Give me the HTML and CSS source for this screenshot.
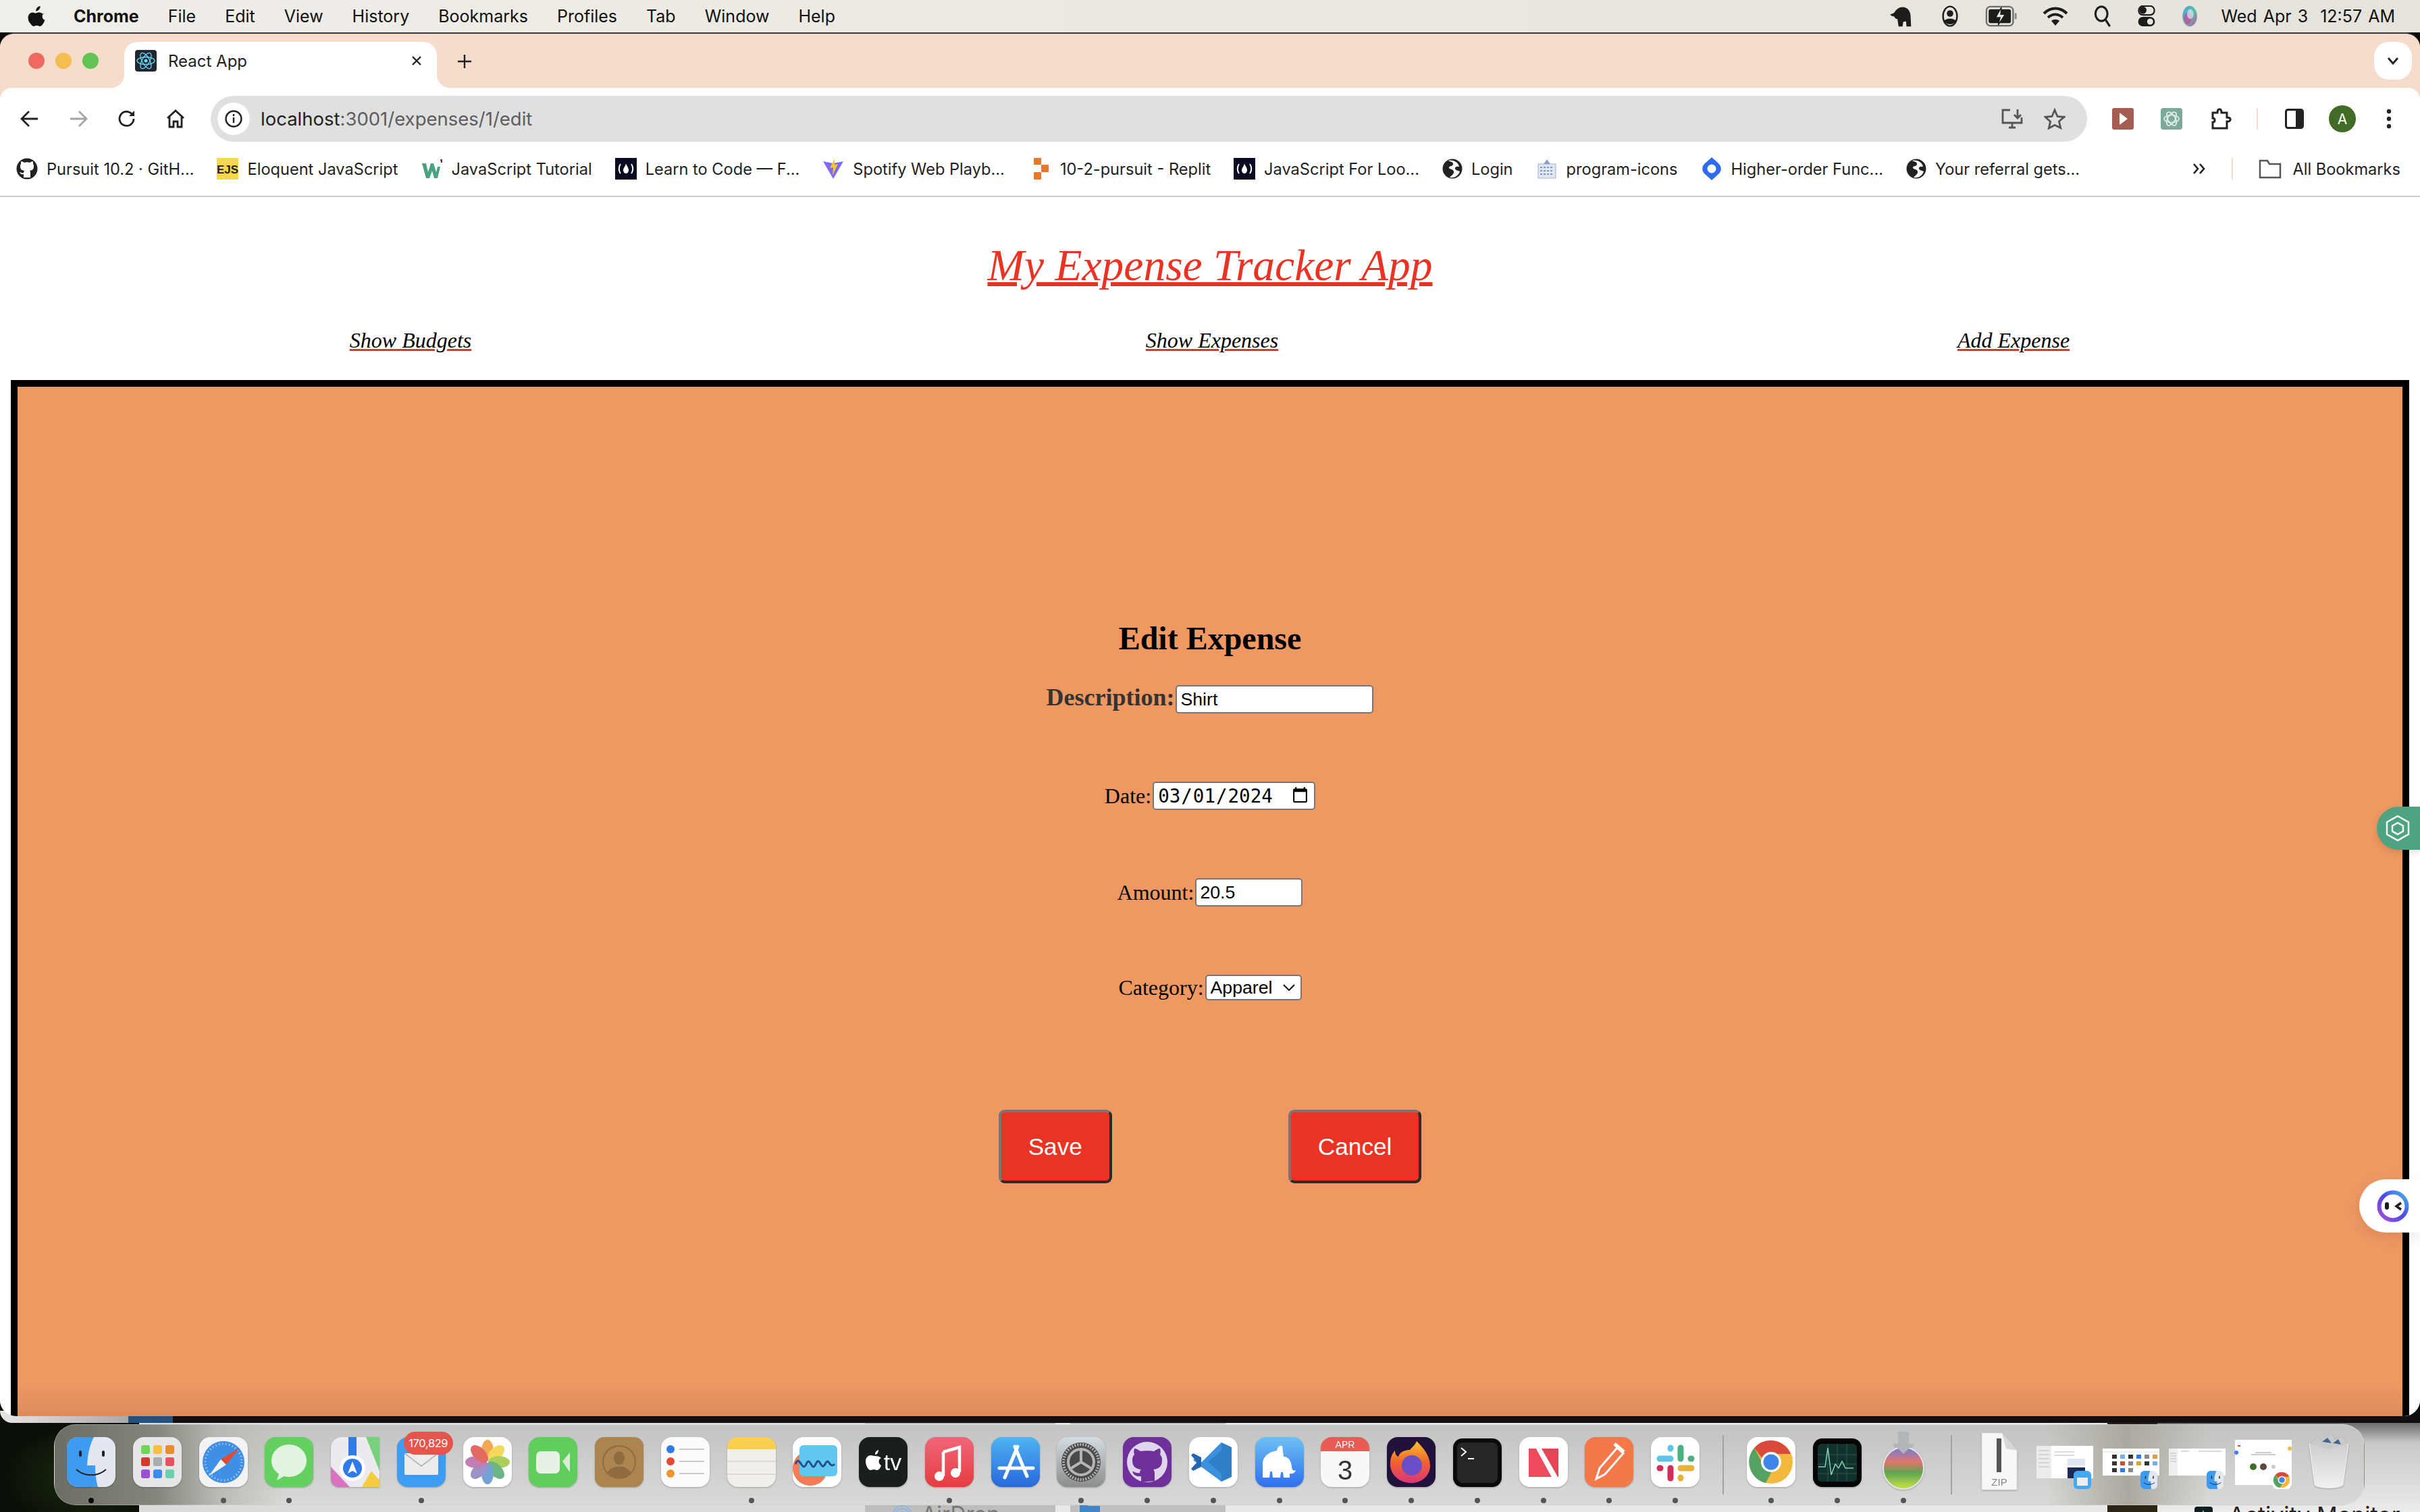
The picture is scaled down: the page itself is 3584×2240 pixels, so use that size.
FILE: index.html
```html
<!DOCTYPE html>
<html lang="en">
<head>
    <meta charset="UTF-8">
    <title>React App</title>
    <link rel="stylesheet" href="styles.css">
</head>
<body>
<svg class="symbols" width="0" height="0">
    <symbol id="mini-finder" viewBox="0 0 26 28"><rect width="26" height="28" rx="6" fill="#e3e7ef"/><path d="M6 0h9c-2 5-3 9-3 16h4c0 4 0 8 1 12H6a6 6 0 0 1-6-6V6a6 6 0 0 1 6-6z" fill="#3f9bf2"/><rect x="7" y="8" width="1.500" height="4" fill="#222"/><rect x="19" y="8" width="1.500" height="4" fill="#222"/><path d="M5 18c5 4 12 4 17 0" fill="none" stroke="#222"/></symbol>
    <symbol id="mini-chrome" viewBox="0 0 28 28"><rect width="28" height="28" rx="6" fill="#fff"/><circle cx="14" cy="14" r="12" fill="#f3b93f"/><path d="M14 2a12 12 0 0 1 11 7H14a5 5 0 0 0-5 3L4 6a12 12 0 0 1 10-4z" fill="#d94a3a"/><path d="M4 6l5 9a5 5 0 0 0 6 4l-4 7A12 12 0 0 1 4 6z" fill="#55a363"/><circle cx="14" cy="14" r="6" fill="#fff"/><circle cx="14" cy="14" r="4.500" fill="#4285e8"/></symbol>
    <symbol id="globe" viewBox="0 0 30 30"><circle cx="15" cy="15" r="14.500" fill="#222"/><path d="M9 3c3 2 7 1 7 5s-5 2-6 5 6 2 7 6-4 6-6 9c8 1 13-3 15-9-3-2-6-1-7-4s3-4 6-3c-1-6-8-11-16-9z" fill="#fff"/></symbol>
    <symbol id="fcc" viewBox="0 0 32 32"><rect width="32" height="32" fill="#0a0a23"/><path d="M8 9c-3 4-3 10 0 14M24 9c3 4 3 10 0 14" fill="none" stroke="#fff" stroke-width="2"/><path d="M16 8c1 4 4 6 4 10 0 3-2 5-4 5s-4-2-4-5c0-3 3-5 4-10z" fill="#fff"/></symbol>
</svg>
<div class="screen">

    <!-- what shows behind the browser window -->
    <div class="under-edge">
        <span class="edge-grey"></span><span class="edge-blue"></span><span class="edge-black"></span>
    </div>
    <div class="under-windows">
        <span class="uw-wall"></span>
        <span class="uw-side"></span>
        <span class="uw-airdrop"><svg width="30" height="30" viewBox="0 0 30 30" fill="none" stroke="#8fb4e6" stroke-width="2"><circle cx="15" cy="15" r="5"/><circle cx="15" cy="15" r="10"/><circle cx="15" cy="15" r="14"/></svg>AirDrop</span>
        <span class="uw-gap"></span>
        <span class="uw-folder"><svg width="30" height="24" viewBox="0 0 30 24"><path d="M0 0h10l3 3h17v21H0z" fill="#3f86c9"/></svg></span>
        <span class="uw-white"></span>
        <span class="uw-wall2"></span>
        <span class="uw-activity"><svg width="27" height="30" viewBox="0 0 27 30"><rect width="27" height="30" rx="4" fill="#10201e"/><path d="M2 16h8l3-10 3 16 3-6h6" fill="none" stroke="#6fb7a5" stroke-width="1.500"/></svg>Activity Monitor</span>
    </div>

    <header class="menubar">
        <div class="menu-left">
            <svg class="apple" width="26" height="32" viewBox="0 0 26 32"><path d="M18.600 1c.2 2-.6 3.800-1.700 5.100-1.200 1.400-2.900 2.400-4.700 2.300-.2-1.900.7-3.800 1.700-5C15 2 16.900 1.100 18.600 1zM24.800 11.200c-2.100 1.300-3.200 3-3.200 5.200 0 2.500 1.400 4.300 3.900 5.300-.7 2.100-1.600 4-2.900 5.800-1.300 1.800-2.500 3.400-4.400 3.400-1.900 0-2.500-1.100-4.700-1.100-2.200 0-2.900 1.100-4.700 1.100-1.900 0-3.200-1.700-4.500-3.600C2 25.100.6 21.700.6 18.400c0-5.200 3.400-8 6.700-8 1.800 0 3.300 1.200 4.500 1.200 1.100 0 2.800-1.300 4.900-1.300 2.200 0 3.900 1 5.300 2.200z" fill="#111"/></svg>
            <b class="menu-app">Chrome</b>
            <span>File</span><span>Edit</span><span>View</span><span>History</span><span>Bookmarks</span><span>Profiles</span><span>Tab</span><span>Window</span><span>Help</span>
        </div>
        <div class="menu-right">
            <svg width="42" height="38" viewBox="0 0 42 38"><path d="M1 16c3-1 5-1 8-4 3-5 8-9 14-9 8 0 13 6 14 14l1 20h-8l-1-9-5 1-1 8h-7l-2-13c-3 0-5-2-6-5-2 1-5-1-7-3z" fill="#1c1c1c"/></svg>
            <svg width="30" height="40" viewBox="0 0 30 40" fill="none"><ellipse cx="15" cy="20" rx="13" ry="18" stroke="#1c1c1c" stroke-width="3"/><circle cx="15" cy="15" r="6" fill="#1c1c1c"/><path d="M4 29c4-6 18-6 22 0-4 8-18 8-22 0z" fill="#1c1c1c"/></svg>
            <svg width="50" height="34" viewBox="0 0 50 34"><rect x="1.500" y="2" width="42" height="30" rx="6" fill="none" stroke="#6d6d6a" stroke-width="2.500"/><rect x="5" y="6" width="35" height="22" rx="3" fill="#1c1c1c"/><rect x="46" y="12" width="3" height="10" rx="1.500" fill="#888"/><path d="M25 3l-9 16h7l-3 12 11-17h-7z" fill="#e8e5de" stroke="#1c1c1c" stroke-width="1.500"/></svg>
            <svg width="38" height="30" viewBox="0 0 38 30" fill="none" stroke="#1c1c1c" stroke-width="4"><path d="M2 11c10-10 24-10 34 0"/><path d="M8 17c7-6 15-6 22 0"/><path d="M19 29l-6-7c3-3 9-3 12 0z" fill="#1c1c1c" stroke="none"/></svg>
            <svg width="30" height="36" viewBox="0 0 30 36" fill="none" stroke="#1c1c1c" stroke-width="3.500"><ellipse cx="13" cy="14" rx="10" ry="12"/><path d="M20 24l7 11"/></svg>
            <svg width="28" height="36" viewBox="0 0 28 36"><rect x="1" y="1" width="26" height="15" rx="7" fill="none" stroke="#1c1c1c" stroke-width="2.500"/><circle cx="8" cy="8" r="6" fill="#1c1c1c"/><rect y="19" width="28" height="16" rx="8" fill="#1c1c1c"/><circle cx="20" cy="27" r="5" fill="#e8e5de"/></svg>
            <svg width="28" height="40" viewBox="0 0 28 40"><defs><linearGradient id="siri" x1="0" y1="0" x2="1" y2="1"><stop offset="0" stop-color="#4f9fe0"/><stop offset=".5" stop-color="#54c0a5"/><stop offset="1" stop-color="#c851a8"/></linearGradient></defs><ellipse cx="14" cy="20" rx="13.500" ry="19" fill="url(#siri)"/><ellipse cx="10" cy="24" rx="7" ry="11" fill="#c24f9c" opacity=".8"/><ellipse cx="15" cy="16" rx="6" ry="9" fill="#dceaf3" opacity=".7"/></svg>
            <span class="clock">Wed Apr 3&nbsp; 12:57 AM</span>
        </div>
    </header>

    <div class="window">
        <div class="tabstrip">
            <div class="lights"><i class="red"></i><i class="yellow"></i><i class="green"></i></div>
            <div class="tab">
                <svg width="32" height="32" viewBox="0 0 32 32" fill="none" stroke="#61dafb" stroke-width="1.300"><rect width="32" height="32" rx="4" fill="#23272f" stroke="none"/><ellipse cx="16" cy="16" rx="13" ry="5.500"/><ellipse cx="16" cy="16" rx="13" ry="5.500" transform="rotate(60 16 16)"/><ellipse cx="16" cy="16" rx="13" ry="5.500" transform="rotate(120 16 16)"/><circle cx="16" cy="16" r="2.500" fill="#61dafb" stroke="none"/></svg>
                <span class="tab-title">React App</span>
                <svg class="tab-close" width="16" height="16" viewBox="0 0 16 16" stroke="#222" stroke-width="2.400"><path d="M2 2l12 12M14 2L2 14"/></svg>
            </div>
            <svg class="tab-new" width="22" height="22" viewBox="0 0 22 22" stroke="#222" stroke-width="2.400"><path d="M11 1v20M1 11h20"/></svg>
            <div class="tab-list"><svg width="18" height="12" viewBox="0 0 18 12" fill="none" stroke="#222" stroke-width="2.800"><path d="M2 2l7 8 7-8"/></svg></div>
        </div>

        <div class="toolbar">
            <div class="nav-buttons">
                <svg width="28" height="26" viewBox="0 0 28 26" fill="none" stroke="#222" stroke-width="2.800"><path d="M26 13H3M13 2L2 13l11 11"/></svg>
                <svg width="28" height="26" viewBox="0 0 28 26" fill="none" stroke="#a4a4a4" stroke-width="2.800"><path d="M2 13h23M15 2l11 11-11 11"/></svg>
                <svg width="28" height="28" viewBox="0 0 28 28" fill="none" stroke="#222" stroke-width="2.800"><path d="M24 14a10.500 10.500 0 1 1-3-7.500L24 9"/><path d="M25 2v8h-8" fill="#222" stroke="none"/></svg>
                <svg width="28" height="28" viewBox="0 0 28 28" fill="none" stroke="#222" stroke-width="2.800"><path d="M2 13L14 2l12 11M5 11v15h6v-8h6v8h6V11"/></svg>
            </div>
            <div class="omnibox">
                <span class="site-info"><svg width="28" height="28" viewBox="0 0 28 28" fill="none" stroke="#222" stroke-width="2.400"><circle cx="14" cy="14" r="11.500"/><path d="M14 12v8M14 7v3"/></svg></span>
                <span class="url"><span class="url-host">localhost</span>:3001/expenses/1/edit</span>
                <svg class="omni-icon" width="34" height="30" viewBox="0 0 34 30" fill="none" stroke="#555" stroke-width="2.800"><path d="M14 2H3v19h28v-8M12 28h10M17 21v7M25 1v13M20 9l5 5 5-5"/></svg>
                <svg class="omni-icon" width="32" height="32" viewBox="0 0 32 32" fill="none" stroke="#555" stroke-width="2.800"><path d="M16 3l4 9.500 10 .8-7.600 6.500 2.300 9.700L16 25.300 7.300 30l2.300-9.700L2 13.300l10-.8z"/></svg>
            </div>
            <div class="extensions">
                <svg width="32" height="32" viewBox="0 0 32 32"><rect width="32" height="32" rx="3" fill="#a55f50"/><path d="M11 7l12 9-12 9z" fill="#fff"/></svg>
                <svg width="32" height="32" viewBox="0 0 32 32" fill="none" stroke="#e3f0ec" stroke-width="1.600"><rect width="32" height="32" rx="4" fill="#7ba99a" stroke="none"/><ellipse cx="16" cy="16" rx="11" ry="5.500"/><ellipse cx="16" cy="16" rx="11" ry="5.500" transform="rotate(60 16 16)"/><ellipse cx="16" cy="16" rx="11" ry="5.500" transform="rotate(120 16 16)"/></svg>
                <svg width="34" height="34" viewBox="0 0 34 34" fill="none" stroke="#222" stroke-width="3"><path d="M5 8h7c0-7 6-7 6 0h8v7c7 0 7 6 0 6v10H5v-9c4 0 4-6 0-6z"/></svg>
                <span class="toolbar-sep"></span>
                <svg width="28" height="30" viewBox="0 0 28 30"><rect x="1.500" y="1.500" width="25" height="27" rx="3" fill="none" stroke="#222" stroke-width="3"/><rect x="16" y="2" width="10" height="26" fill="#222"/></svg>
                <span class="avatar">A</span>
                <svg class="kebab" width="8" height="30" viewBox="0 0 8 30" fill="#222"><circle cx="4" cy="4" r="3.200"/><circle cx="4" cy="15" r="3.200"/><circle cx="4" cy="26" r="3.200"/></svg>
            </div>
        </div>

        <div class="bookmarks">
            <div class="bm-list">
                <a class="bm"><svg width="32" height="32" viewBox="0 0 32 32"><circle cx="16" cy="16" r="15.500" fill="#222"/><path d="M11 29v-5c-4 1-5-1-6-3 2 0 3 2 6 1 0-2 1-2 1-3-5-1-6-3-6-7 0-2 1-3 1-4 0-2 0-3 1-3 1 0 3 1 4 2 2-1 6-1 8 0 1-1 3-2 4-2 1 0 1 1 1 3 0 1 1 2 1 4 0 4-1 6-6 7 1 1 1 2 1 4v6z" fill="#fff"/></svg>Pursuit 10.2 · GitH...</a>
                <a class="bm"><svg width="32" height="32" viewBox="0 0 32 32"><rect width="32" height="32" fill="#f7d84a"/><text x="16" y="23" font-family="Liberation Sans" font-size="17" font-weight="700" text-anchor="middle" fill="#222">EJS</text></svg>Eloquent JavaScript</a>
                <a class="bm"><svg width="32" height="32" viewBox="0 0 32 32"><path d="M1 8h6l3 13 4-13h4l4 13 2-8h4l-4 17h-5l-3-11-4 11H7z" fill="#4aa37f"/><path d="M28 2h3v5h-2z" fill="#444"/></svg>JavaScript Tutorial</a>
                <a class="bm"><svg width="32" height="32"><use href="#fcc"/></svg>Learn to Code — F...</a>
                <a class="bm"><svg width="32" height="32" viewBox="0 0 32 32"><path d="M1 5l15 3 15-3-15 26z" fill="#7d6cf5"/><path d="M18 1l-7 14 5-1-1 12 8-17-5 1z" fill="#fdc62c"/></svg>Spotify Web Playb...</a>
                <a class="bm bm-replit"><svg width="22" height="32" viewBox="0 0 22 32" fill="#e8762c"><rect width="11" height="10" rx="1"/><rect x="11" y="10" width="11" height="11" rx="1"/><rect y="21" width="11" height="11" rx="1"/></svg>10-2-pursuit - Replit</a>
                <a class="bm"><svg width="32" height="32"><use href="#fcc"/></svg>JavaScript For Loo...</a>
                <a class="bm"><svg width="30" height="30"><use href="#globe"/></svg>Login</a>
                <a class="bm"><svg width="32" height="32" viewBox="0 0 32 32"><rect x="3" y="9" width="26" height="21" fill="#dfe7f2" stroke="#9fb2cf"/><path d="M6 14h20M6 19h20M6 24h20" stroke="#7f97c0" stroke-dasharray="3 2" stroke-width="2"/><path d="M16 2l5 7H11z" fill="#8aa0c7"/></svg>program-icons</a>
                <a class="bm"><svg width="32" height="34" viewBox="0 0 32 34"><path d="M16 0l11 10a10 10 0 0 1 0 14L16 34 5 24a10 10 0 0 1 0-14z" fill="#2e6bf0"/><circle cx="16" cy="17" r="6.500" fill="#fff"/></svg>Higher-order Func...</a>
                <a class="bm"><svg width="30" height="30"><use href="#globe"/></svg>Your referral gets...</a>
            </div>
            <div class="bm-end">
                <svg width="20" height="18" viewBox="0 0 20 18" fill="none" stroke="#222" stroke-width="2.600"><path d="M2 2l6 7-6 7M11 2l6 7-6 7"/></svg>
                <span class="bm-sep"></span>
                <a class="bm"><svg width="34" height="30" viewBox="0 0 34 30" fill="none" stroke="#555" stroke-width="2.500"><path d="M2 28V3h11l3 5h16v20z"/></svg>All Bookmarks</a>
            </div>
        </div>

        <div class="page">
            <h1 class="app-title">My Expense Tracker App</h1>
            <nav class="app-nav">
                <a href="#">Show Budgets</a>
                <a href="#">Show Expenses</a>
                <a href="#">Add Expense</a>
            </nav>
            <main class="app-main">
                <h2 class="form-title">Edit Expense</h2>
                <form class="expense-form">
                    <div class="field">
                        <label class="label-strong" for="description">Description:</label>
                        <input class="input-text" type="text" id="description" value="Shirt">
                    </div>
                    <div class="field">
                        <label for="date">Date:</label>
                        <input class="input-date" type="date" id="date" value="2024-03-01">
                    </div>
                    <div class="field">
                        <label for="amount">Amount:</label>
                        <input class="input-amount" type="text" id="amount" value="20.5">
                    </div>
                    <div class="field">
                        <label for="category">Category:</label>
                        <select class="input-select" id="category"><option>Apparel</option></select>
                    </div>
                    <div class="form-buttons">
                        <button type="button" class="btn">Save</button>
                        <button type="button" class="btn">Cancel</button>
                    </div>
                </form>
            </main>
        </div>
    </div>

    <!-- extension widgets stuck to the right edge -->
    <div class="widget-green"><svg width="36" height="40" viewBox="0 0 36 40" fill="none" stroke="#fff" stroke-width="2.400"><path d="M18 2l16 9v18l-16 9-16-9V11z"/><path d="M18 12l8 4.500v8L18 29l-8-4.500v-8z"/></svg></div>
    <div class="widget-white"><svg width="48" height="48" viewBox="0 0 48 48" fill="none"><defs><linearGradient id="ring" x1="0" y1="1" x2="1" y2="0"><stop offset="0" stop-color="#b04fd0"/><stop offset=".5" stop-color="#4b47ee"/><stop offset="1" stop-color="#45b5e0"/></linearGradient></defs><circle cx="24" cy="24" r="20.500" stroke="url(#ring)" stroke-width="6"/><rect x="12" y="18" width="6" height="11" rx="3" fill="#1c1c1c"/><path d="M36 19l-7 5 7 5" stroke="#1c1c1c" stroke-width="3.400"/></svg></div>

    <div class="dock">
        <div class="dock-item on first"><svg width="72" height="74" viewBox="0 0 72 74"><rect width="72" height="74" rx="16" fill="#e3e7ef"/><path d="M16 0h24C34 12 31 24 30 42h12c0 12 1 22 4 32H16A16 16 0 0 1 0 58V16A16 16 0 0 1 16 0z" fill="#3f9bf2"/><rect x="18" y="20" width="4" height="9" rx="2" fill="#222"/><rect x="52" y="20" width="4" height="9" rx="2" fill="#222"/><path d="M14 48c12 11 32 11 44 0" fill="none" stroke="#222" stroke-width="2"/></svg></div>
        <div class="dock-item"><svg width="72" height="74" viewBox="0 0 72 74"><rect width="72" height="74" rx="16" fill="#e6e6e6"/><rect x="12" y="12" width="13" height="13" rx="3" fill="#6fd658"/><rect x="30" y="12" width="13" height="13" rx="3" fill="#f6bf3c"/><rect x="48" y="12" width="13" height="13" rx="3" fill="#ea8c2e"/><rect x="12" y="30" width="13" height="13" rx="3" fill="#d13a2c"/><rect x="30" y="30" width="13" height="13" rx="3" fill="#a7adb1"/><rect x="48" y="30" width="13" height="13" rx="3" fill="#ec5065"/><rect x="12" y="48" width="13" height="13" rx="3" fill="#9b4fd6"/><rect x="30" y="48" width="13" height="13" rx="3" fill="#3a8af0"/><rect x="48" y="48" width="13" height="13" rx="3" fill="#6bd0ae"/></svg></div>
        <div class="dock-item on"><svg width="72" height="74" viewBox="0 0 72 74"><rect width="72" height="74" rx="16" fill="#f3f3f5"/><circle cx="36" cy="37" r="31" fill="#3f8fe6"/><circle cx="36" cy="37" r="27" fill="none" stroke="#cfe3f8" stroke-width="3" stroke-dasharray="1 4"/><path d="M60 16L32 33l8 8z" fill="#e5492f"/><path d="M14 58l18-25 8 8z" fill="#f1f1f1"/></svg></div>
        <div class="dock-item on"><svg width="72" height="74" viewBox="0 0 72 74"><rect width="72" height="74" rx="16" fill="#63d05f"/><ellipse cx="36" cy="35" rx="26" ry="24" fill="#e5f3e3"/><path d="M22 52l-4 12 14-8z" fill="#e5f3e3"/></svg></div>
        <div class="dock-item"><svg width="72" height="74" viewBox="0 0 72 74"><rect width="72" height="74" rx="16" fill="#eceaf0"/><path d="M52 0h20v50z" fill="#75d17a"/><path d="M0 44l28 30H12A12 12 0 0 1 0 62z" fill="#d874bf"/><path d="M46 74l14-24 12 14v10z" fill="#f5cc3e"/><rect x="26" y="0" width="12" height="34" fill="#2f7ce8"/><circle cx="32" cy="46" r="19" fill="#fff"/><circle cx="32" cy="46" r="14" fill="#2f7ce8"/><path d="M32 36l7 18-7-4-7 4z" fill="#fff"/></svg></div>
        <div class="dock-item on"><svg width="72" height="74" viewBox="0 0 72 74"><rect width="72" height="74" rx="16" fill="#3f9cf3"/><rect x="11" y="24" width="50" height="32" rx="2" fill="#ececec"/><path d="M11 24l25 19 25-19" fill="none" stroke="#aaa" stroke-width="1.500"/></svg><span class="dock-badge">170,829</span></div>
        <div class="dock-item"><svg width="72" height="74" viewBox="0 0 72 74"><rect width="72" height="74" rx="16" fill="#fff"/><g opacity=".85"><ellipse cx="36" cy="20" rx="9" ry="16" fill="#f09a35"/><ellipse cx="36" cy="20" rx="9" ry="16" fill="#f4d13d" transform="rotate(45 36 37)"/><ellipse cx="36" cy="20" rx="9" ry="16" fill="#9cc83f" transform="rotate(90 36 37)"/><ellipse cx="36" cy="20" rx="9" ry="16" fill="#53a86f" transform="rotate(135 36 37)"/><ellipse cx="36" cy="20" rx="9" ry="16" fill="#5b93cf" transform="rotate(180 36 37)"/><ellipse cx="36" cy="20" rx="9" ry="16" fill="#8b7fbe" transform="rotate(225 36 37)"/><ellipse cx="36" cy="20" rx="9" ry="16" fill="#b668a5" transform="rotate(270 36 37)"/><ellipse cx="36" cy="20" rx="9" ry="16" fill="#dc5148" transform="rotate(315 36 37)"/></g></svg></div>
        <div class="dock-item"><svg width="72" height="74" viewBox="0 0 72 74"><rect width="72" height="74" rx="16" fill="#5fce5c"/><rect x="11" y="21" width="35" height="33" rx="7" fill="#e7f2e5"/><path d="M50 36l11-13v29z" fill="#dcecd9"/></svg></div>
        <div class="dock-item"><svg width="72" height="74" viewBox="0 0 72 74"><rect width="72" height="74" rx="14" fill="#ab8450"/><circle cx="36" cy="37" r="24" fill="none" stroke="#8f6c40" stroke-width="2"/><ellipse cx="36" cy="31" rx="8" ry="10" fill="#8f6c40"/><path d="M18 54c6-14 30-14 36 0-10 9-26 9-36 0z" fill="#8f6c40"/></svg></div>
        <div class="dock-item"><svg width="72" height="74" viewBox="0 0 72 74"><rect width="72" height="74" rx="16" fill="#fbfbfb"/><circle cx="14" cy="18" r="6" fill="#2f7ce8"/><circle cx="14" cy="36" r="6" fill="#e5483b"/><circle cx="14" cy="54" r="6" fill="#ee952c"/><path d="M27 18h37M27 36h37M27 54h37" stroke="#c9c9c9" stroke-width="2"/></svg></div>
        <div class="dock-item on"><svg width="72" height="74" viewBox="0 0 72 74"><rect width="72" height="74" rx="16" fill="#f1efe9"/><path d="M0 18A16 16 0 0 1 16 0h40a16 16 0 0 1 16 18z" fill="#f8d04d"/><path d="M0 36h72M0 55h72" stroke="#dcdad3" stroke-width="2"/></svg></div>
        <div class="dock-item"><svg width="72" height="74" viewBox="0 0 72 74"><rect width="72" height="74" rx="16" fill="#fff"/><circle cx="26" cy="46" r="26" fill="#f57b55"/><rect x="10" y="12" width="56" height="46" rx="6" fill="#60c8f0"/><path d="M4 40c6-16 10 14 16 0s8 14 14 0 8 12 14 0 6 8 14 0" fill="none" stroke="#234f8f" stroke-width="3"/></svg></div>
        <div class="dock-item"><svg width="72" height="74" viewBox="0 0 72 74"><rect width="72" height="74" rx="16" fill="#1a1f1d"/><path d="M24 28c-3 0-4-1-6-1-4 0-8 3-8 9 0 6 4 13 7 13 2 0 3-1 5-1s3 1 5 1c3 0 5-4 6-7-4-2-5-9 0-11-2-2-5-3-9-3zM24 26c0-4 2-6 5-7 0 4-2 7-5 7z" fill="#fff"/><text x="50" y="49" font-family="Liberation Sans" font-size="34" text-anchor="middle" fill="#fff">tv</text></svg></div>
        <div class="dock-item on"><svg width="72" height="74" viewBox="0 0 72 74"><defs><linearGradient id="music" x1="0" y1="0" x2="0" y2="1"><stop offset="0" stop-color="#f0667a"/><stop offset="1" stop-color="#e73b40"/></linearGradient></defs><rect width="72" height="74" rx="16" fill="url(#music)"/><path d="M27 22l24-7v37" fill="none" stroke="#fff" stroke-width="4.500"/><path d="M27 22v36" stroke="#fff" stroke-width="4.500"/><circle cx="21" cy="58" r="7" fill="#fff"/><circle cx="45" cy="53" r="7" fill="#fff"/></svg></div>
        <div class="dock-item"><svg width="72" height="74" viewBox="0 0 72 74"><defs><linearGradient id="store" x1="0" y1="0" x2="0" y2="1"><stop offset="0" stop-color="#4fb4f0"/><stop offset="1" stop-color="#2868dc"/></linearGradient></defs><rect width="72" height="74" rx="16" fill="url(#store)"/><path d="M39 14L20 60M35 14l18 44M12 46h50" stroke="#fff" stroke-width="5" fill="none" stroke-linecap="round"/></svg></div>
        <div class="dock-item on"><svg width="72" height="74" viewBox="0 0 72 74"><defs><linearGradient id="gear" x1="0" y1="0" x2="0" y2="1"><stop offset="0" stop-color="#d3dde2"/><stop offset="1" stop-color="#8c8c8c"/></linearGradient></defs><rect width="72" height="74" rx="16" fill="url(#gear)"/><circle cx="36" cy="37" r="29" fill="#4a4a4a"/><circle cx="36" cy="37" r="26" fill="none" stroke="#b5b5b5" stroke-width="4" stroke-dasharray="2 2"/><circle cx="36" cy="37" r="19" fill="none" stroke="#b5b5b5" stroke-width="4"/><path d="M36 37V19M36 37l16 10M36 37L20 47" stroke="#b5b5b5" stroke-width="4"/></svg></div>
        <div class="dock-item on"><svg width="72" height="74" viewBox="0 0 72 74"><rect width="72" height="74" rx="16" fill="#6e3199"/><circle cx="36" cy="37" r="30" fill="#dfd5ec"/><path d="M27 67V58c-8 1-11-2-13-7 3 0 5 3 11 2 0-3 1-4 2-5-10-1-13-6-13-14 0-4 1-6 3-8-1-3-1-6 0-9 3 0 6 2 9 4 5-1 15-1 20 0 3-2 6-4 9-4 1 3 1 6 0 9 2 2 3 4 3 8 0 8-3 13-13 14 1 1 2 3 2 6v11z" fill="#6e3199"/></svg></div>
        <div class="dock-item on"><svg width="72" height="74" viewBox="0 0 72 74"><rect width="72" height="74" rx="16" fill="#fff"/><path d="M48 8l15 7v44l-15 7-30-28z" fill="#2f80c9"/><path d="M48 8L18 38 9 31l-3 3 12 10 30 22V54L28 37 48 20z" fill="#3c91dd"/><path d="M18 30L6 24l-3 3 9 10-9 10 3 3 12-6z" fill="#2565ad"/></svg></div>
        <div class="dock-item on"><svg width="72" height="74" viewBox="0 0 72 74"><defs><linearGradient id="tp" x1="0" y1="0" x2="0" y2="1"><stop offset="0" stop-color="#6cc1f4"/><stop offset="1" stop-color="#2f6ff0"/></linearGradient></defs><rect width="72" height="74" rx="16" fill="url(#tp)"/><path d="M11 60V40c0-12 10-18 21-20 1-5 3-8 8-7l2 16c8 0 11 7 12 14 0 5 2 8 6 6-1 4-5 6-9 5v6h-9l-1-8h-3l-1 8H26l-1-9h-3l-1 9z" fill="#fff"/></svg></div>
        <div class="dock-item on"><svg width="72" height="74" viewBox="0 0 72 74"><rect width="72" height="74" rx="16" fill="#f8f8f6"/><path d="M0 21V16A16 16 0 0 1 16 0h40a16 16 0 0 1 16 16v5z" fill="#e55d54"/><text x="36" y="16" font-family="Liberation Sans" font-size="14" text-anchor="middle" fill="#fff">APR</text><text x="36" y="63" font-family="Liberation Sans" font-size="40" text-anchor="middle" fill="#333">3</text></svg></div>
        <div class="dock-item on"><svg width="72" height="74" viewBox="0 0 72 74"><defs><linearGradient id="fox" x1="0" y1="0" x2="0" y2="1"><stop offset="0" stop-color="#f8c531"/><stop offset=".5" stop-color="#f0622e"/><stop offset="1" stop-color="#d9357a"/></linearGradient></defs><rect width="72" height="74" rx="16" fill="#20123a"/><path d="M44 6c10 10 20 22 20 36 0 16-13 26-28 26S5 58 5 40c0-10 3-16 7-20 0 5 2 8 5 9 2-8 12-10 17-10 3-4 8-7 10-13z" fill="url(#fox)"/><circle cx="37" cy="42" r="15" fill="#6a4fc9"/></svg></div>
        <div class="dock-item on"><svg width="72" height="74" viewBox="0 0 72 74"><rect x="0" y="2" width="72" height="72" rx="14" fill="#0a0a0a"/><rect x="6" y="8" width="60" height="60" rx="8" fill="#262626"/><path d="M12 16l7 6-7 6M22 32h9" fill="none" stroke="#fff" stroke-width="2"/></svg></div>
        <div class="dock-item on"><svg width="72" height="74" viewBox="0 0 72 74"><rect width="72" height="74" rx="16" fill="#fff"/><path d="M14 17h11l23 42H14z" fill="#ee4c5e"/><path d="M30 17h28v42H52z" fill="#e64558"/><path d="M25 17h8l24 42h-9z" fill="#fff"/></svg></div>
        <div class="dock-item on"><svg width="72" height="74" viewBox="0 0 72 74"><rect width="72" height="74" rx="16" fill="#f4784a"/><path d="M17 62l5-16 26-30 9 8-27 31z" fill="none" stroke="#fff" stroke-width="3"/><path d="M44 10l14 12" stroke="#fff" stroke-width="5"/></svg></div>
        <div class="dock-item on"><svg width="72" height="74" viewBox="0 0 72 74"><rect width="72" height="74" rx="16" fill="#fff"/><g fill="none" stroke-width="9" stroke-linecap="round"><path d="M29 16v1" stroke="#5fc3ea"/><path d="M13 32h16" stroke="#5fc3ea"/><path d="M44 16v16" stroke="#4bb07f"/><path d="M59 32h1" stroke="#4bb07f"/><path d="M44 46h16" stroke="#e6b23c"/><path d="M44 60v1" stroke="#e6b23c"/><path d="M29 46v15" stroke="#d22c5a"/><path d="M13 46h1" stroke="#d22c5a"/></g></svg></div>
        <span class="dock-sep"></span>
        <div class="dock-item on"><svg width="72" height="74" viewBox="0 0 72 74"><rect width="72" height="74" rx="16" fill="#fff"/><circle cx="36" cy="37" r="32" fill="#f3b93f"/><path d="M36 5a32 32 0 0 1 29 20H36a13 13 0 0 0-12 8L11 16A32 32 0 0 1 36 5z" fill="#d94a3a"/><path d="M11 16l13 24a13 13 0 0 0 14 9L28 68A32 32 0 0 1 11 16z" fill="#55a363"/><circle cx="36" cy="37" r="15" fill="#fff"/><circle cx="36" cy="37" r="11.500" fill="#4285e8"/></svg></div>
        <div class="dock-item on"><svg width="72" height="74" viewBox="0 0 72 74"><rect y="2" width="72" height="72" rx="14" fill="#060606"/><rect x="7" y="10" width="58" height="56" rx="6" fill="#12302c"/><path d="M7 26h58M7 40h58M7 54h58M22 10v56M36 10v56M50 10v56" stroke="#2d5650" stroke-width="1"/><path d="M8 44h10l4-28 5 40 6-16 5 6 5-10 5 10h12" fill="none" stroke="#7dd4bb" stroke-width="1.500"/></svg></div>
        <div class="dock-item on"><svg width="72" height="74" viewBox="0 0 72 74"><defs><linearGradient id="sonoma" x1="0" y1="0" x2="0" y2="1"><stop offset="0" stop-color="#6a7fd8"/><stop offset=".35" stop-color="#e4746c"/><stop offset=".6" stop-color="#5fa350"/><stop offset="1" stop-color="#c8e34a"/></linearGradient></defs><ellipse cx="36" cy="46" rx="30" ry="31" fill="url(#sonoma)" stroke="#e6e6ea" stroke-width="2"/><path d="M29 -8h14v18h8L36 25 21 10h8z" fill="#b1b6b9"/></svg></div>
        <span class="dock-sep"></span>
        <div class="dock-item no-dot"><svg class="tall-icon" width="72" height="86" viewBox="0 0 72 86"><path d="M10 0h30l22 26v58H10z" fill="#f7f7f7" stroke="#ddd"/><path d="M40 0l22 26-16-3z" fill="#d7d7d7"/><rect x="32" y="8" width="7" height="50" fill="#555"/><text x="36" y="78" font-family="Liberation Sans" font-size="15" text-anchor="middle" fill="#888">ZIP</text></svg></div>
        <div class="dock-thumb"><svg width="84" height="80" viewBox="0 0 84 80"><rect y="13" width="84" height="48" fill="#fff"/><rect y="13" width="22" height="48" fill="#ececec"/><path d="M3 20h16M3 26h16M3 32h16M3 38h16M3 44h16M26 22h30M26 27h30" stroke="#bbb"/><rect x="46" y="45" width="26" height="16" fill="#1d2a55"/><rect x="46" y="32" width="26" height="10" fill="#dfe5ee"/><rect x="55" y="50" width="26" height="27" rx="6" fill="#45a8f2"/><rect x="60" y="60" width="16" height="12" fill="#eee"/></svg></div>
        <div class="dock-thumb"><svg width="84" height="80" viewBox="0 0 84 80"><rect y="17" width="84" height="40" fill="#fff"/><path d="M0 22h84" stroke="#ddd"/><g fill="#333"><rect x="14" y="26" width="7" height="6"/><rect x="26" y="26" width="7" height="6" fill="#6fb0e6"/><rect x="38" y="26" width="7" height="6"/><rect x="50" y="26" width="7" height="6" fill="#2f7ce8"/><rect x="62" y="26" width="7" height="6" fill="#888"/><rect x="74" y="26" width="7" height="6" fill="#d6a23c"/><rect x="14" y="36" width="7" height="6"/><rect x="26" y="36" width="7" height="6" fill="#c9502f"/><rect x="38" y="36" width="7" height="6" fill="#888"/><rect x="50" y="36" width="7" height="6" fill="#d6a23c"/><rect x="62" y="36" width="7" height="6"/><rect x="74" y="36" width="7" height="6" fill="#6fb0e6"/><rect x="14" y="46" width="7" height="6"/><rect x="26" y="46" width="7" height="6" fill="#2f7ce8"/><rect x="38" y="46" width="7" height="6" fill="#888"/></g><use href="#mini-finder" x="55" y="50" width="27" height="27"/></svg></div>
        <div class="dock-thumb"><svg width="84" height="80" viewBox="0 0 84 80"><rect y="17" width="84" height="40" fill="#fff"/><rect y="17" width="13" height="40" fill="#eee"/><path d="M2 24h9M2 28h9M2 32h9M2 36h9M18 21h12M44 21h34" stroke="#bbb"/><use href="#mini-finder" x="55" y="50" width="27" height="27"/></svg></div>
        <div class="dock-thumb"><svg width="84" height="80" viewBox="0 0 84 80"><rect y="4" width="84" height="67" fill="#fff"/><rect x="4" y="12" width="4" height="2" fill="#e5483b"/><circle cx="2" cy="23" r="3" fill="#3f7ce8"/><circle cx="81" cy="17" r="3" fill="#f3b93f"/><path d="M30 23h24M24 26h36" stroke="#999"/><circle cx="27" cy="44" r="5" fill="#3f6d28"/><circle cx="42" cy="44" r="5" fill="#5d4a3c"/><circle cx="57" cy="44" r="3" fill="#ccc"/><use href="#mini-chrome" x="56" y="50" width="27" height="27"/></svg></div>
        <div class="dock-item no-dot"><svg class="tall-icon" width="72" height="84" viewBox="0 0 72 84"><defs><linearGradient id="bin" x1="0" y1="0" x2="0" y2="1"><stop offset="0" stop-color="#cfcfcd"/><stop offset="1" stop-color="#f0f0ee"/></linearGradient></defs><path d="M7 16h58l-8 60c-1 7-41 7-42 0z" fill="url(#bin)" stroke="#f4f4f3"/><path d="M8 16l12-10 8 6 10-12 8 10 8-6 10 12-28 8z" fill="#c9c9cb"/><path d="M26 13l8-6 6 8zM42 15l8-6 4 8z" fill="#44648a"/></svg></div>
    </div>
</div>
</body>
</html>
```

FILE: styles.css
```css
* {
    box-sizing: border-box;
}

body {
    margin: 0;
    background-color: #0b0f08;
    font-family: Inter, "Liberation Sans", sans-serif;
}

.symbols {
    position: absolute;
}

.screen {
    position: relative;
    width: 3584px;
    height: 2240px;
    overflow: hidden;
    display: flex;
    flex-direction: column;
}

/* stuff below the browser window */
.under-edge {
    position: absolute;
    left: 0;
    right: 0;
    top: 2090px;
    height: 18px;
    display: flex;
}

.edge-grey {
    width: 190px;
    background: linear-gradient(90deg, #e6e6e6, #a9a9a9);
    border-radius: 0 0 0 24px;
}

.edge-blue {
    width: 66px;
    background-color: #1d5288;
}

.edge-black {
    flex: 1;
    background-color: #101010;
}

.under-windows {
    position: absolute;
    left: 0;
    right: 0;
    top: 2108px;
    height: 132px;
    display: flex;
    align-items: flex-end;
}

.under-windows > span {
    height: 100%;
    display: flex;
    align-items: flex-end;
    overflow: hidden;
}

.uw-wall {
    width: 206px;
    background: radial-gradient(ellipse at 60% 60%, #1a2a10, #0a0f07 70%);
}

.uw-side {
    width: 1075px;
    background-color: #dcdcdc;
}

.uw-airdrop {
    width: 282px;
    background-color: #bdbdbd;
    color: #777;
    font-size: 32px;
    line-height: 1;
    gap: 14px;
    padding-left: 40px;
    margin-bottom: -20px;
    height: calc(100% + 20px) !important;
}

.uw-gap {
    width: 22px;
    background-color: #e8e8e8;
}

.uw-folder {
    width: 230px;
    background-color: #c0c0c0;
    padding-left: 14px;
    margin-bottom: -12px;
    height: calc(100% + 12px) !important;
}

.uw-white {
    width: 1306px;
    background-color: #e8e8e8;
}

.uw-wall2 {
    width: 74px;
    background-color: #2b2415;
}

.uw-activity {
    flex: 1;
    background: linear-gradient(#6c6c6c, #c9c9c9 30px, #e0e0e0 100px, #f4f4f4);
    color: #222;
    font-size: 34px;
    line-height: 1;
    gap: 24px;
    padding-left: 55px;
    margin-bottom: -22px;
    height: calc(100% + 22px) !important;
}

.menubar {
    height: 48px;
    flex: none;
    display: flex;
    justify-content: space-between;
    align-items: center;
    padding: 0 37px 0 41px;
    background: linear-gradient(90deg, #f0eee8, #e6e3dc);
    color: #111;
    font-size: 25px;
}

.menu-left {
    display: flex;
    align-items: center;
    gap: 43px;
}

.apple {
    margin-right: -1px;
}

.menu-app {
    font-weight: 700;
}

.menu-right {
    display: flex;
    align-items: center;
    gap: 36px;
}

.menu-right svg {
    height: 32px;
}

.clock {
    margin-left: -4px;
    word-spacing: 2px;
}

.window {
    position: relative;
    height: 2050px;
    flex: none;
    display: flex;
    flex-direction: column;
    background-color: #f6dccb;
    border-top: 2px solid #3b3b3b;
    border-radius: 22px 22px 24px 24px;
    overflow: hidden;
    color: #1f1f1f;
}

.tabstrip {
    height: 80px;
    flex: none;
    display: flex;
    align-items: flex-end;
    background-color: #f6dccb;
    position: relative;
}

.lights {
    display: flex;
    gap: 16px;
    padding: 0 0 28px 42px;
    align-self: flex-end;
}

.lights i {
    display: block;
    width: 24px;
    height: 24px;
    border-radius: 50%;
}

.lights .red { background-color: #ee6a5f; }
.lights .yellow { background-color: #f5bd4f; }
.lights .green { background-color: #61c454; }

.tab {
    position: relative;
    width: 463px;
    height: 68px;
    margin-left: 38px;
    padding: 0 22px 12px 16px;
    display: flex;
    align-items: center;
    gap: 17px;
    background-color: #fff;
    border-radius: 20px 20px 0 0;
    font-size: 24px;
}

/* the small curves where the tab meets the toolbar */
.tab::before,
.tab::after {
    content: "";
    position: absolute;
    bottom: 0;
    width: 20px;
    height: 20px;
}

.tab::before {
    left: -20px;
    background: radial-gradient(circle at 0 0, transparent 20px, #fff 20.5px);
}

.tab::after {
    right: -20px;
    background: radial-gradient(circle at 100% 0, transparent 20px, #fff 20.5px);
}

.tab-title {
    flex: 1;
}

.tab-new {
    margin: 0 0 28px 30px;
}

.tab-list {
    margin: 0 12px 12px auto;
    width: 56px;
    height: 56px;
    background-color: #fff;
    border-radius: 22px;
    display: flex;
    align-items: center;
    justify-content: center;
}

.toolbar {
    height: 80px;
    flex: none;
    display: flex;
    padding-top: 12px;
    background-color: #fff;
    border-radius: 18px 18px 0 0;
}

.nav-buttons {
    width: 312px;
    height: 68px;
    padding: 0 0 0 30px;
    display: flex;
    align-items: center;
    gap: 44px;
}

.omnibox {
    width: 2779px;
    height: 68px;
    display: flex;
    align-items: center;
    background-color: #e0e0e0;
    border-radius: 34px;
    padding: 0 32px 0 10px;
    gap: 30px;
    color: #5d5d5d;
    font-size: 27.5px;
}

.site-info {
    width: 48px;
    height: 48px;
    border-radius: 50%;
    background-color: #fff;
    display: flex;
    align-items: center;
    justify-content: center;
    margin-right: -14px;
}

.url {
    flex: 1;
}

.url-host {
    color: #222;
}

.extensions {
    flex: 1;
    height: 68px;
    display: flex;
    align-items: center;
    gap: 40px;
    padding-left: 37px;
}

.toolbar-sep {
    width: 2px;
    height: 32px;
    background-color: #f6dccb;
    margin: 0 0 0 -4px;
}

.avatar {
    width: 40px;
    height: 40px;
    margin: 0 -1px 0 -3px;
    border-radius: 50%;
    background-color: #416b27;
    color: #fff;
    font-size: 21px;
    display: flex;
    align-items: center;
    justify-content: center;
}

.kebab {
    margin-left: 6px;
}

.bookmarks {
    height: 82px;
    flex: none;
    display: flex;
    justify-content: space-between;
    align-items: center;
    padding: 0 29px 0 24px;
    background-color: #fff;
    border-bottom: 2px solid #cfcfcf;
    font-size: 23.6px;
}

.bm-list {
    display: flex;
    align-items: center;
    gap: 34px;
}

.bm {
    display: flex;
    align-items: center;
    gap: 13px;
    white-space: nowrap;
}

.bm-replit {
    margin-left: 9px;
    gap: 17px;
}

.bm-end {
    display: flex;
    align-items: center;
    gap: 38px;
}

.bm-end .bm {
    gap: 16px;
}

.bm-sep {
    width: 2px;
    height: 32px;
    background-color: #f6dccb;
}

.page {
    flex: 1;
    min-height: 0;
    display: flex;
    flex-direction: column;
    background-color: #fff;
}

.app-title {
    margin: 0;
    padding-top: 61px;
    height: 148px;
    text-align: center;
    font-family: "Liberation Serif", serif;
    font-style: italic;
    font-weight: 400;
    font-size: 65.5px;
    line-height: 80px;
    color: #ea3323;
    text-decoration: underline;
    text-decoration-thickness: 6px;
    text-underline-offset: 3px;
}

.app-nav {
    height: 123px;
    display: grid;
    grid-template-columns: repeat(3, 1187px);
    justify-content: center;
    justify-items: center;
    align-items: center;
    padding: 6px 0 0 6px;
    font-family: "Liberation Serif", serif;
    font-style: italic;
    font-size: 32px;
}

.app-nav a {
    color: #000;
    text-decoration: underline;
    text-decoration-color: #ea3323;
    text-decoration-thickness: 3px;
    text-underline-offset: 2px;
}

.app-main {
    flex: 1;
    margin: 0 16px;
    padding-top: 345px;
    border: 10px solid #000;
    border-bottom: 0;
    background: linear-gradient(#f09862 calc(100% - 50px), #db8c5c);
    color: #000;
    font-family: "Liberation Serif", serif;
    font-size: 32px;
}

.form-title {
    margin: 0 0 41px;
    text-align: center;
    font-size: 48px;
    line-height: 56px;
}

.expense-form {
    display: flex;
    flex-direction: column;
    align-items: center;
    gap: 101px;
}

.field {
    display: flex;
    align-items: center;
    gap: 2px;
}

.label-strong {
    font-size: 36px;
    line-height: 34px;
    padding-bottom: 6px;
    font-weight: 700;
    color: #333;
}

.input-text,
.input-amount,
.input-date,
.input-select {
    height: 42px;
    margin: 0;
    padding: 0 5px;
    border: 2px solid #767676;
    border-radius: 5px;
    background-color: #fff;
    color: #000;
    font-family: "Liberation Sans", sans-serif;
    font-size: 26.67px;
}

.input-text {
    width: 293px;
}

.input-amount {
    width: 159px;
}

.input-date {
    width: 241px;
    font-family: "DejaVu Sans Mono", monospace;
    font-size: 27.5px;
}

.input-select {
    width: 143px;
    height: 38px;
    padding-left: 6px;
    appearance: none;
    background: #fff url("data:image/svg+xml,%3Csvg xmlns='http://www.w3.org/2000/svg' width='18' height='10' viewBox='0 0 18 10'%3E%3Cpath d='M1 1l8 8 8-8' fill='none' stroke='%23111' stroke-width='2'/%3E%3C/svg%3E") no-repeat right 8px center;
}

.form-buttons {
    display: flex;
    gap: 261px;
    margin-top: 61px;
}

.btn {
    padding: 30px 40px;
    border: 4px solid;
    border-color: #767676 #2b2b2b #2b2b2b #767676;
    border-radius: 9px;
    background-color: #ea3323;
    color: #fff;
    font-family: "Liberation Sans", sans-serif;
    font-size: 35.2px;
    line-height: 41px;
}

.widget-green {
    position: absolute;
    right: 0;
    top: 1195px;
    width: 64px;
    height: 64px;
    padding-left: 13px;
    display: flex;
    align-items: center;
    background-color: #4ea481;
    border-radius: 32px 0 0 32px;
    box-shadow: 0 4px 12px rgba(0, 0, 0, 0.12);
}

.widget-white {
    position: absolute;
    right: 0;
    top: 1747px;
    width: 90px;
    height: 79px;
    padding-left: 26px;
    display: flex;
    align-items: center;
    background-color: #fff;
    border-radius: 40px 0 0 40px;
    box-shadow: 0 6px 24px rgba(0, 0, 0, 0.1);
}

.dock {
    position: absolute;
    left: 80px;
    top: 2110px;
    width: 3422px;
    height: 120px;
    padding: 18px 0 0 18px;
    display: flex;
    gap: 25.75px;
    border: 1px solid rgba(255, 255, 255, 0.25);
    border-radius: 32px;
    background:
        linear-gradient(90deg, #6d6d63 0, #85857c 150px, #b9b9b4 240px, rgba(200, 200, 197, 0) 340px),
        linear-gradient(90deg, rgba(168, 166, 157, 0) 2950px, #aba99f 3070px, rgba(168, 166, 157, 0) 3190px),
        linear-gradient(#c3c3c1, #d9d9d7);
}

.dock-item {
    position: relative;
    width: 72px;
    display: flex;
    flex-direction: column;
    align-items: center;
    flex: none;
}

.dock-item svg {
    flex: none;
    overflow: visible;
    filter: drop-shadow(0 1px 1px rgba(0, 0, 0, 0.25));
}

.dock-item::after {
    content: "";
    width: 8px;
    height: 8px;
    margin-top: 16px;
    border-radius: 50%;
}

.dock-item.on::after {
    background-color: #555;
}

.dock-item.first::after {
    background-color: #000;
}

.dock-item.no-dot::after {
    display: none;
}

.dock-badge {
    position: absolute;
    left: 10px;
    top: -8px;
    width: 73px;
    height: 34px;
    border-radius: 17px;
    background-color: #e5554b;
    color: #fff;
    font-size: 16.5px;
    line-height: 34px;
    text-align: center;
    letter-spacing: -0.4px;
}

.dock-sep {
    width: 2px;
    height: 88px;
    margin: -3px 8.3px 0;
    background-color: #a2a2a0;
    flex: none;
}

.tall-icon {
    margin-top: -6px;
}

.dock-thumb {
    width: 72px;
    flex: none;
}

.dock-thumb svg {
    display: block;
    margin-left: -6px;
    overflow: visible;
}
```
